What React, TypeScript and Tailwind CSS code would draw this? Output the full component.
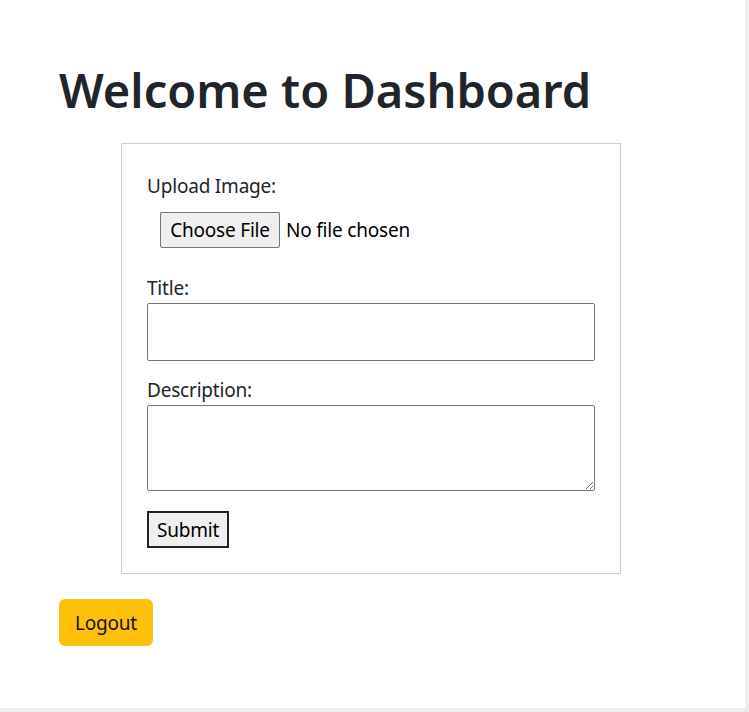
import React from 'react';

const font = { fontFamily: '"Segoe UI", "Noto Sans", "Open Sans", sans-serif' };

const App: React.FC = () => {
  return (
    <div className="min-h-[712px] bg-[#ececec]" style={font}>
      <div className="w-[745px] h-[708px] bg-white text-[#212529]">
        <div className="px-[59px] pt-[62px]">
          <h1 className="text-[47px] font-semibold leading-[1.2] mb-[25px]">Welcome to Dashboard</h1>

          <form className="ml-[62px] w-[500px] border border-[#cccccc] px-[25px] pt-[27px] pb-[25px] text-[19px] tracking-[-0.2px]">
            <label className="block leading-[30px]">Upload Image:</label>
            <div className="flex items-center ml-[13px] mt-[11px]">
              <span className="h-[36px] w-[120px] flex items-center justify-center bg-[#efefef] border border-[#767676] rounded-[2px] text-black">
                Choose File
              </span>
              <span className="ml-[6px] text-black">No file chosen</span>
            </div>

            <label className="block leading-[30px] mt-[25px]">Title:</label>
            <input type="text" className="block w-full h-[58px] border border-[#767676] rounded-[2px]" />

            <label className="block leading-[30px] mt-[14px]">Description:</label>
            <textarea className="block w-full h-[86px] border border-[#767676] rounded-[2px]" />

            <button type="button" className="block mt-[20px] w-[82px] h-[37px] text-black bg-[#efefef] border-2 border-[#222222]">
              Submit
            </button>
          </form>

          <button type="button" className="mt-[25px] w-[94px] h-[47px] rounded-[6px] bg-[#ffc107] text-[19px] tracking-[-0.2px] text-[#111]">
            Logout
          </button>
        </div>
      </div>
    </div>
  );
};

export default App;
